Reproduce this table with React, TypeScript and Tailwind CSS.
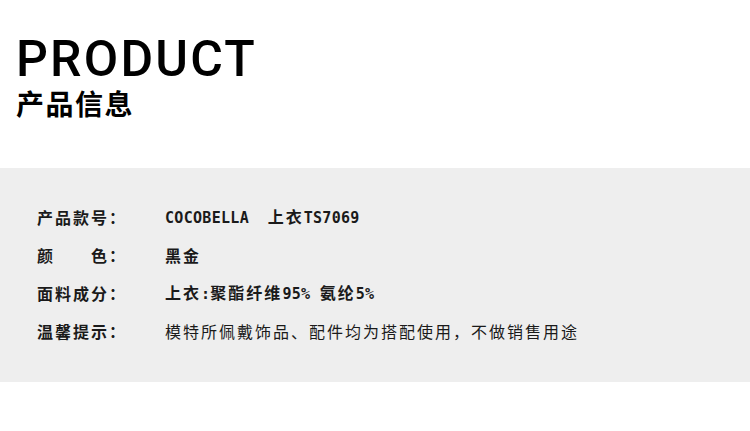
const rows: { label: string; value: string; weight: string }[] = [
  { label: "产品款号：", value: "COCOBELLA  上衣TS7069", weight: "font-bold" },
  { label: "颜\u3000\u3000色：", value: "黑金", weight: "font-bold" },
  { label: "面料成分：", value: "上衣:聚酯纤维95% 氨纶5%", weight: "font-bold" },
  { label: "温馨提示：", value: "模特所佩戴饰品、配件均为搭配使用，不做销售用途", weight: "font-normal" },
];

// Latin runs sit in a narrow monospace face, like the half-width glyphs of the original
function Value({ text }: { text: string }) {
  const parts = text.split(/([A-Za-z0-9%:\s]+)/).filter(Boolean);
  return (
    <>
      {parts.map((part, i) =>
        /^[A-Za-z0-9%:\s]+$/.test(part) ? (
          <span key={i} className="whitespace-pre font-['DejaVu_Sans_Mono',monospace] text-[15px] tracking-[0.3px]">
            {part}
          </span>
        ) : (
          <span key={i}>{part}</span>
        ),
      )}
    </>
  );
}

export default function App() {
  return (
    <div className="h-[431px] w-[750px] overflow-hidden bg-white text-[#111]">
      <header className="h-[168px] pl-[16px] pt-[34px]">
        <h1 className="font-['Roboto','Liberation_Sans',sans-serif] text-[50px] font-medium leading-[50px] tracking-[2.2px] text-black">
          PRODUCT
        </h1>
        <h2 className="mt-[4px] font-['Noto_Sans_CJK_SC',sans-serif] text-[28px] font-bold leading-[30px] tracking-[1.5px] text-black">
          产品信息
        </h2>
      </header>
      <section className="flex h-[214px] flex-col bg-[#eeeeee] pl-[37px] pt-[30px]">
        {rows.map((row) => (
          <div key={row.label} className="flex h-[38px] items-center font-['Noto_Sans_CJK_SC',sans-serif] text-[16px] tracking-[2px]">
            <span className="w-[128px] font-bold text-[#1a1a1a]">{row.label}</span>
            <span className={`${row.weight} text-[#1a1a1a]`}>
              <Value text={row.value} />
            </span>
          </div>
        ))}
      </section>
    </div>
  );
}
